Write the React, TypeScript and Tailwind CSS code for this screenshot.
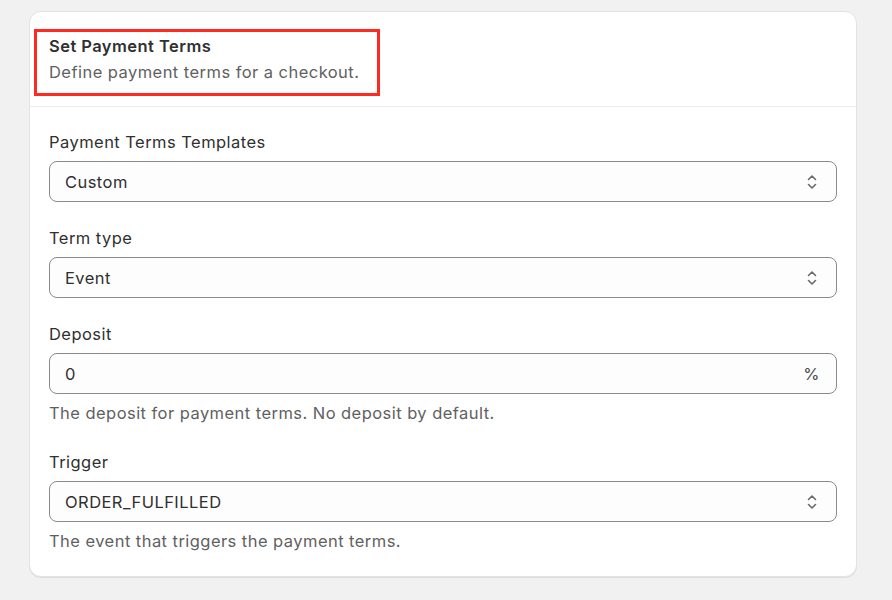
import React from "react";

const Chevrons = () => (
  <svg width="14" height="18" viewBox="0 0 14 18" fill="none" className="shrink-0">
    <path d="M3.5 6.5 L7 3 L10.5 6.5" stroke="#6b6b6b" strokeWidth="1.6" strokeLinecap="round" strokeLinejoin="round" />
    <path d="M3.5 11.5 L7 15 L10.5 11.5" stroke="#6b6b6b" strokeWidth="1.6" strokeLinecap="round" strokeLinejoin="round" />
  </svg>
);

const Select = ({ value }: { value: string }) => (
  <div className="h-[41px] rounded-[8px] border border-[#8a8a8a] bg-[#fdfdfd] flex items-center justify-between pl-[15px] pr-[17px] pt-[1px] text-[#303030]">
    <span>{value}</span>
    <Chevrons />
  </div>
);

const Label = ({ children }: { children: React.ReactNode }) => (
  <div className="leading-[20px] text-[#303030] mb-[9px]">{children}</div>
);

const Help = ({ children }: { children: React.ReactNode }) => (
  <div className="mt-[9px] leading-[20px] text-[#616161]">{children}</div>
);

export default function App() {
  return (
    <div
      className="w-[892px] h-[600px] bg-[#f1f1f1] pt-[11px] pl-[29px] text-[16.5px] tracking-[0.45px]"
      style={{ fontFamily: "Inter, 'Noto Sans', sans-serif" }}
    >
      <div className="w-[828px] bg-white rounded-[12px] border border-[#e3e3e3] shadow-[0_1px_0_rgba(0,0,0,0.08)]">
        <div className="relative border-b border-[#ebebeb] px-[19px] pt-[23px] pb-[23px]">
          <div className="absolute left-[4px] top-[17px] w-[346px] h-[67px] border-[3px] border-[#ff2a1f]" />
          <div className="leading-[22px] font-semibold text-[#303030]">Set Payment Terms</div>
          <div className="leading-[22px] text-[#616161] mt-[4px]">Define payment terms for a checkout.</div>
        </div>
        <div className="px-[19px] pt-[25px] pb-[25px]">
          <Label>Payment Terms Templates</Label>
          <Select value="Custom" />
          <div className="h-[26px]" />
          <Label>Term type</Label>
          <Select value="Event" />
          <div className="h-[26px]" />
          <Label>Deposit</Label>
          <div className="h-[41px] rounded-[8px] border border-[#8a8a8a] bg-[#fdfdfd] flex items-center justify-between pl-[15px] pr-[16px] pt-[1px] text-[#303030]">
            <span>0</span>
            <span className="text-[#4a4a4a]">%</span>
          </div>
          <Help>The deposit for payment terms. No deposit by default.</Help>
          <div className="h-[29px]" />
          <Label>Trigger</Label>
          <Select value="ORDER_FULFILLED" />
          <Help>The event that triggers the payment terms.</Help>
        </div>
      </div>
    </div>
  );
}
